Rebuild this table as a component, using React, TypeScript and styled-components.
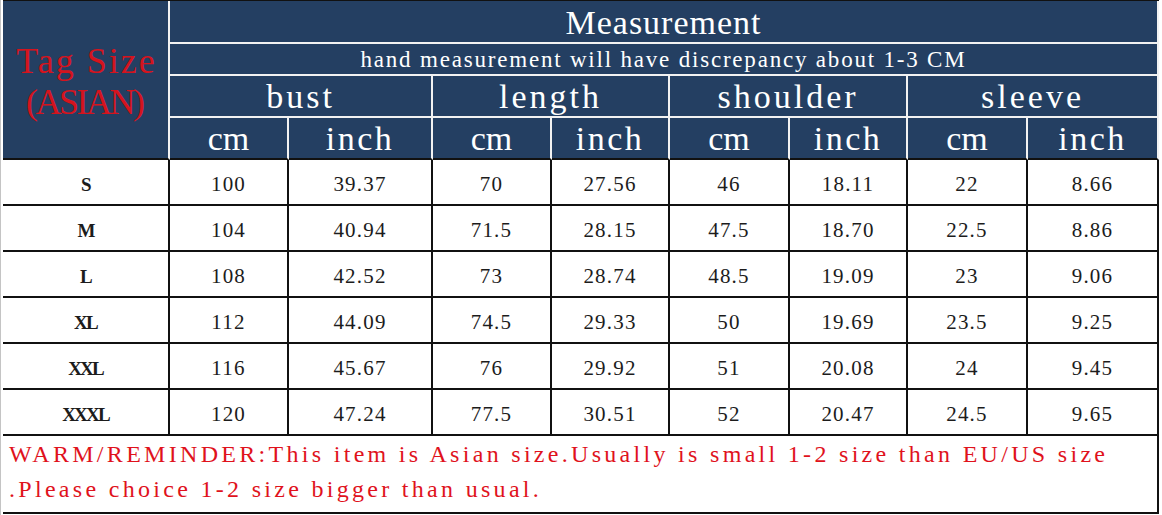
import * as React from 'react';
import styled, { createGlobalStyle, css } from 'styled-components';

const GlobalStyle = createGlobalStyle`
  html, body {
    margin: 0;
    padding: 0;
    background: #fff;
  }
  body {
    font-family: "Liberation Serif", "Noto Sans CJK SC", serif;
  }
`;

const HEAD_BG = '#243f62';
const LINE_W = '2px';

const Page = styled.div`
  width: 1162px;
  height: 515px;
  box-sizing: border-box;
  padding: 0 0 0 2px;
  border-left: 1px solid #c4c4c4;
  overflow: hidden;
`;

const Table = styled.div`
  display: grid;
  grid-template-columns: 167px 119px 144px 119px 118px 120px 118px 120px 131px;
  grid-template-rows: 43px 32px 42px 42px repeat(6, 46px) 78px;
  border-top: 1px solid #111;
  width: 1156px;
`;

const headBase = css`
  box-sizing: border-box;
  background: ${HEAD_BG};
  color: #fff;
  display: flex;
  justify-content: center;
  align-items: flex-end;
  line-height: 1.05;
  padding-bottom: 1px;
  border-right: ${LINE_W} solid #f2f2f2;
  border-bottom: ${LINE_W} solid #f2f2f2;
  white-space: nowrap;
`;

const TagCell = styled.div`
  ${headBase};
  grid-column: 1;
  grid-row: 1 / 5;
  flex-direction: column;
  align-items: center;
  justify-content: center;
  padding: 4px 0 0;
  color: #d4141e;
  font-size: 36px;
  line-height: 41px;
  border-bottom-color: #111;
`;

const TagLine = styled.span<{ $ls: number }>`
  letter-spacing: ${(p) => p.$ls}px;
  margin-right: ${(p) => -p.$ls}px;
`;

const TitleCell = styled.div`
  ${headBase};
  grid-column: 2 / 10;
  font-size: 34px;
  letter-spacing: 1px;
`;

const NoteCell = styled.div`
  ${headBase};
  grid-column: 2 / 10;
  font-size: 23px;
  letter-spacing: 1.8px;
  padding-bottom: 2px;
`;

const GroupCell = styled.div`
  ${headBase};
  grid-column: span 2;
  font-size: 34px;
  letter-spacing: 3px;
`;

const UnitCell = styled.div<{ $ls: number }>`
  ${headBase};
  font-size: 34px;
  letter-spacing: ${(p) => p.$ls}px;
  border-bottom-color: #111;
`;

const Cell = styled.div<{ $bold?: boolean }>`
  box-sizing: border-box;
  display: flex;
  justify-content: center;
  align-items: center;
  padding-top: 5px;
  border-right: ${LINE_W} solid #111;
  border-bottom: ${LINE_W} solid #111;
  color: #1c1c1c;
  font-size: ${(p) => (p.$bold ? 19 : 21)}px;
  font-weight: ${(p) => (p.$bold ? 700 : 400)};
  letter-spacing: ${(p) => (p.$bold ? -1.8 : 1.2)}px;
`;

const Reminder = styled.div`
  box-sizing: border-box;
  grid-column: 1 / 10;
  padding: 1px 0 0 6px;
  border-right: ${LINE_W} solid #111;
  border-bottom: ${LINE_W} solid #111;
  color: #e0121c;
  font-size: 24px;
  line-height: 35px;
  letter-spacing: 3.3px;
  white-space: nowrap;
`;

const groups = ['bust', 'length', 'shoulder', 'sleeve'];

const rows = [
  ['S', '100', '39.37', '70', '27.56', '46', '18.11', '22', '8.66'],
  ['M', '104', '40.94', '71.5', '28.15', '47.5', '18.70', '22.5', '8.86'],
  ['L', '108', '42.52', '73', '28.74', '48.5', '19.09', '23', '9.06'],
  ['XL', '112', '44.09', '74.5', '29.33', '50', '19.69', '23.5', '9.25'],
  ['XXL', '116', '45.67', '76', '29.92', '51', '20.08', '24', '9.45'],
  ['XXXL', '120', '47.24', '77.5', '30.51', '52', '20.47', '24.5', '9.65'],
];

const App: React.FC = () => (
  <>
    <GlobalStyle />
    <Page>
      <Table>
        <TagCell>
          <TagLine $ls={2}>Tag Size</TagLine>
          <TagLine $ls={-2.5}>(ASIAN)</TagLine>
        </TagCell>
        <TitleCell>Measurement</TitleCell>
        <NoteCell>hand measurement will have discrepancy about 1-3 CM</NoteCell>
        {groups.map((g) => (
          <GroupCell key={g}>{g}</GroupCell>
        ))}
        {groups.map((g) => (
          <React.Fragment key={`${g}-unit`}>
            <UnitCell $ls={0}>cm</UnitCell>
            <UnitCell $ls={2.5}>inch</UnitCell>
          </React.Fragment>
        ))}
        {rows.map((row) => row.map((value, i) => (
          <Cell key={`${row[0]}-${i}`} $bold={i === 0}>
            {value}
          </Cell>
        )))}
        <Reminder>
          WARM/REMINDER:This item is Asian size.Usually is small 1-2 size than EU/US size
          <br />
          .Please choice 1-2 size bigger than usual.
        </Reminder>
      </Table>
    </Page>
  </>
);

export default App;
